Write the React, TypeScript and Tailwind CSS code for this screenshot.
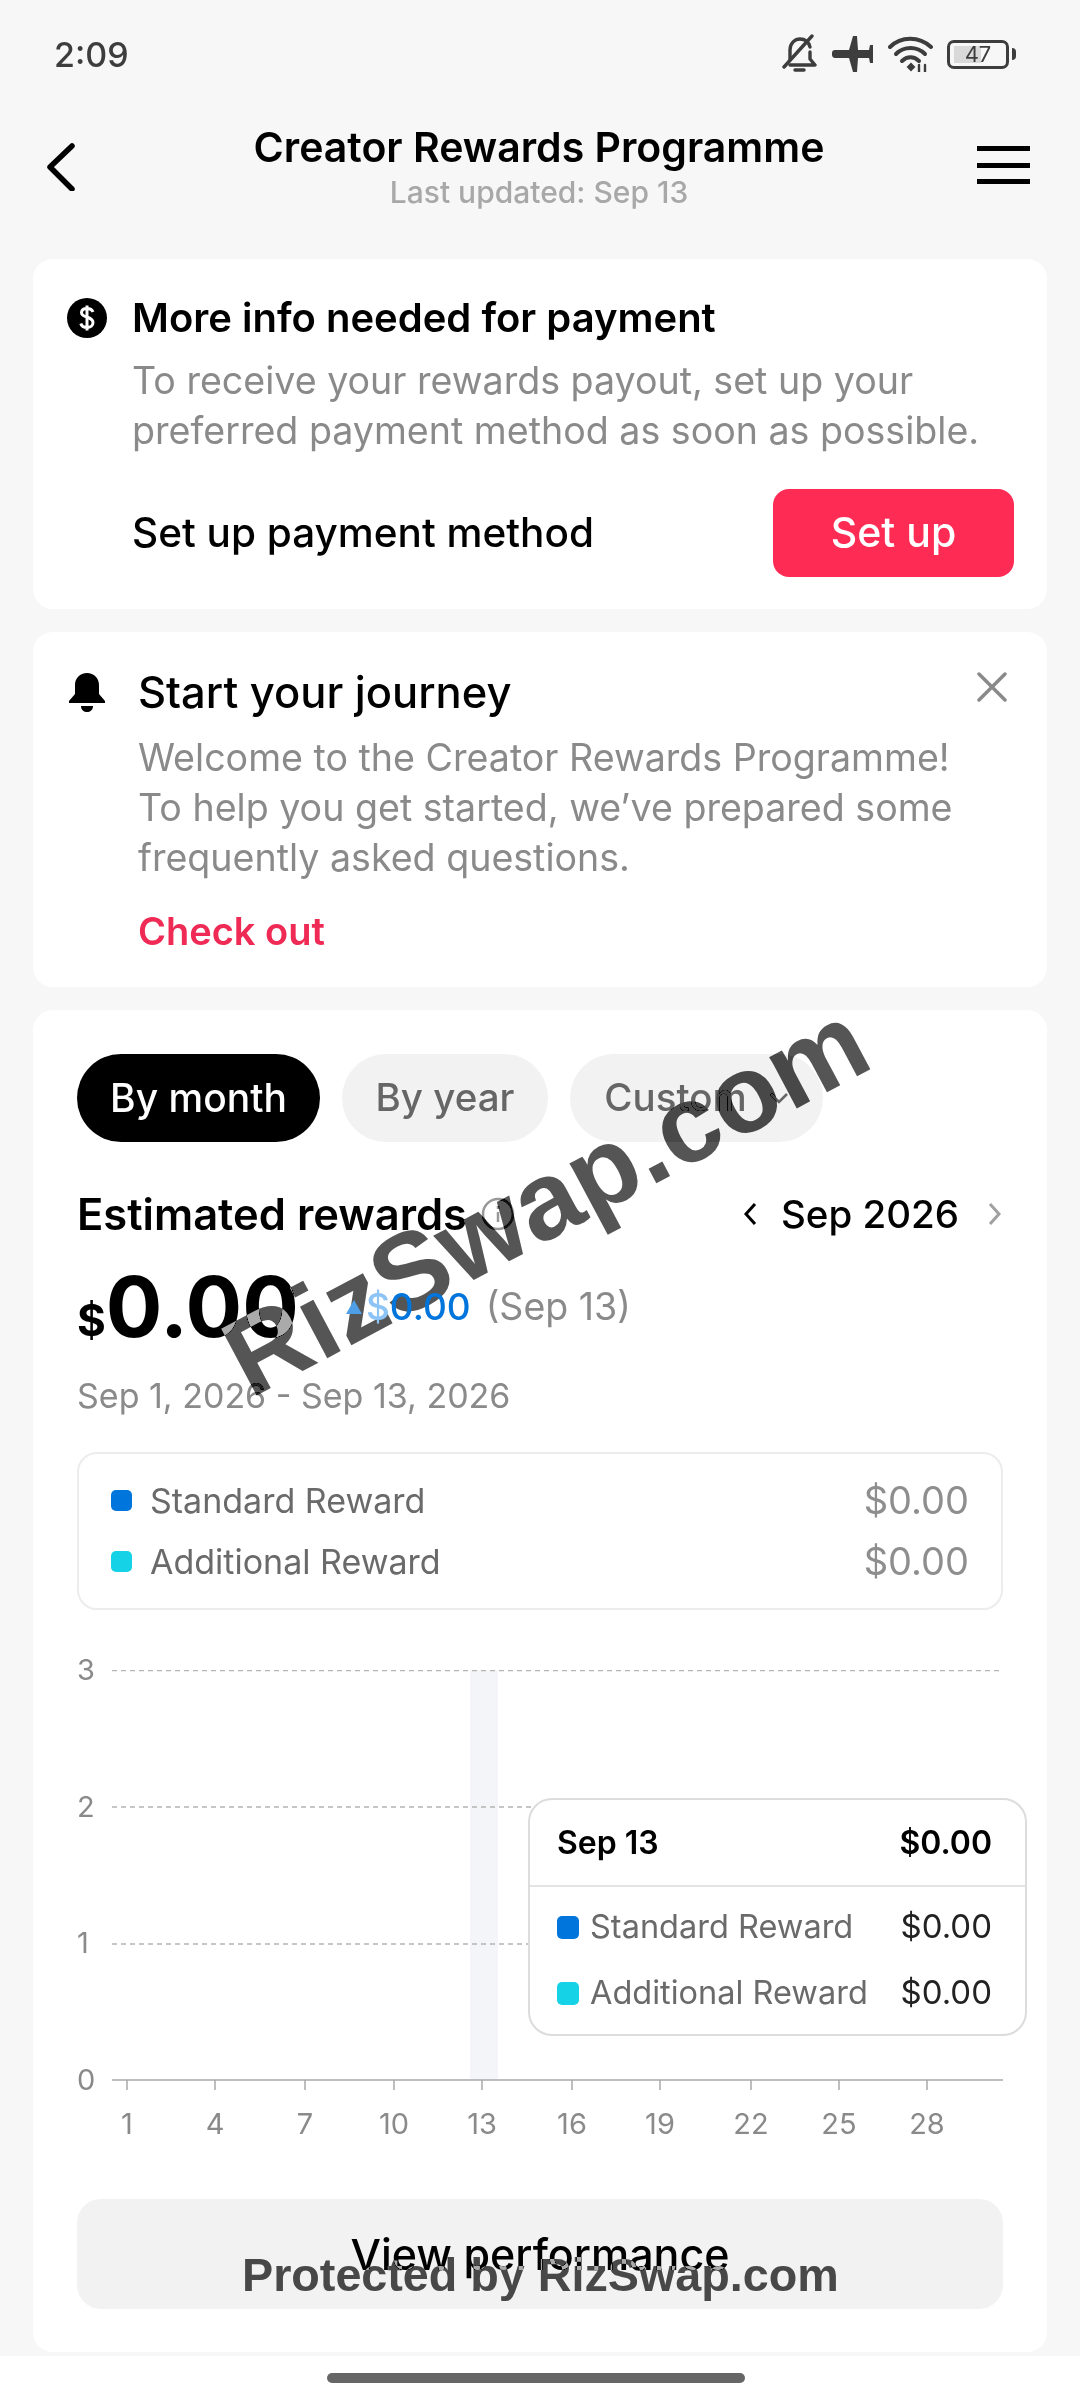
import React from "react";

const ticks = ["1","4","7","10","13","16","19","22","25","28"];
const tickX = [15,103,193,282,370,460,548,639,727,815];

function StatusIcons() {
  return (
    <div className="flex items-center">
      <svg width="36" height="40" viewBox="0 0 36 40" fill="none" stroke="#3d3d3d" strokeWidth="3.4" strokeLinecap="round" strokeLinejoin="round">
        <path d="M9 26 V16 C9 9 14 5 19 5 C24 5 28 8 29 13" />
        <path d="M29 18 V25 L34 31 H9" />
        <path d="M3 33 L31 2" />
        <path d="M14 36 H23" />
      </svg>
      <svg className="ml-[15px]" width="42" height="36" viewBox="0 0 42 36" fill="#3d3d3d">
        <path d="M0 17 C0 15 1 14 3 14 H17 L21 0 H25 L26 14 H37 L38 9 H41 V27 H38 L37 22 H26 L25 36 H21 L17 22 H3 C1 22 0 20 0 19 Z" />
      </svg>
      <svg className="ml-[14px]" width="46" height="36" viewBox="0 0 46 36" fill="none" stroke="#3d3d3d" strokeWidth="4" strokeLinecap="round">
        <path d="M2 11 C13 0 31 0 43 11" />
        <path d="M8 18 C16 10 29 10 37 18" />
        <path d="M14 25 C19 20 26 20 31 25" />
        <path d="M20 31 L23 34 L26 31 L23 28 Z" fill="#3d3d3d" strokeWidth="2" />
        <path d="M31 36 V29 M37 36 V29" strokeWidth="2.4" />
      </svg>
      <div className="ml-[13px] relative flex h-[29px] w-[62px] items-center rounded-[7px] border-[3px] border-[#3d3d3d]">
        <div className="ml-[4px] h-[17px] w-[27px] bg-[#d9d9d9]" />
        <span className="absolute inset-0 flex items-center justify-center text-[22px] leading-none text-[#3d3d3d]">47</span>
      </div>
      <div className="ml-[3px] h-[12px] w-[4px] rounded-r-sm bg-[#3d3d3d]" />
    </div>
  );
}

function Legend({ color, label, value }: { color: string; label: string; value: string }) {
  return (
    <div className="flex h-[61px] items-center">
      <div className={`h-[21px] w-[21px] rounded-[5px] ${color}`} />
      <span className="ml-[18px] text-[34px] text-[#6a6a6a]">{label}</span>
      <span className="ml-auto text-[38px] text-[#8e8e8e]">{value}</span>
    </div>
  );
}

function TipRow({ color, label }: { color: string; label: string }) {
  return (
    <div className="flex h-[66px] items-center">
      <div className={`h-[23px] w-[22px] rounded-[5px] ${color}`} />
      <span className="ml-[11px] text-[32.5px] text-[#6a6a6a]">{label}</span>
      <span className="ml-auto text-[33px] text-[#222]">$0.00</span>
    </div>
  );
}

export default function App() {
  return (
    <div className="relative flex h-[2400px] w-[1080px] flex-col overflow-hidden bg-[#f7f7f7]" style={{ fontFamily: "Inter, Roboto, sans-serif" }}>
      {/* status bar */}
      <div className="flex h-[108px] shrink-0 items-center justify-between pl-[54px] pr-[64px]">
        <span className="text-[34px] font-medium text-[#3d3d3d]">2:09</span>
        <StatusIcons />
      </div>
      {/* header */}
      <div className="flex h-[151px] shrink-0 items-start justify-between pl-[46px] pr-[50px]">
        <div className="w-[53px]">
          <svg className="mt-[35px]" width="30" height="48" viewBox="0 0 30 48" fill="none" stroke="#000" strokeWidth="5.5" strokeLinecap="round" strokeLinejoin="round">
            <path d="M26 3 L4 24 L26 46" />
          </svg>
        </div>
        <div className="ml-[2px] flex flex-col items-center pt-[14px]">
          <span className="text-[41px] font-semibold leading-[50px] text-black">Creator Rewards Programme</span>
          <span className="mt-[2px] text-[30px] font-medium leading-[36px] text-[#a8a8a8]">Last updated: Sep 13</span>
        </div>
        <div className="mt-[38px] flex h-[38px] w-[53px] flex-col justify-between">
          <div className="h-[5px] bg-black" />
          <div className="h-[5px] bg-black" />
          <div className="h-[5px] bg-black" />
        </div>
      </div>

      <div className="flex flex-1 flex-col gap-[23px] px-[33px]">
        {/* payment card */}
        <div className="h-[350px] rounded-[20px] bg-white pl-[34px] pr-[33px] pt-[36px]">
          <div className="flex items-center">
            <svg width="40" height="40" viewBox="0 0 40 40" className="shrink-0">
              <circle cx="20" cy="20" r="20" fill="#000" />
              <path d="M26 14 C25 11.5 23 10.5 20 10.5 C16.5 10.5 14.5 12.3 14.5 14.7 C14.5 20 26 18 26 24.5 C26 27.5 23.5 29.5 20 29.5 C16.5 29.5 14.5 28 13.8 25.5 M20 7.5 V32.5" fill="none" stroke="#fff" strokeWidth="3" />
            </svg>
            <span className="ml-[25px] text-[40px] font-semibold leading-[46px] text-black">More info needed for payment</span>
          </div>
          <div className="ml-[65px] mt-[15px] text-[37.6px] leading-[50px] text-[#8a8a8a]">
            <div>To receive your rewards payout, set up your</div>
            <div>preferred payment method as soon as possible.</div>
          </div>
          <div className="mt-[33px] flex items-center justify-between pl-[65px]">
            <span className="text-[40.5px] font-[550] text-black">Set up payment method</span>
            <div className="flex h-[88px] w-[241px] items-center justify-center rounded-[16px] bg-[#fe2c55] text-[41px] font-[550] text-white">Set up</div>
          </div>
        </div>

        {/* journey card */}
        <div className="relative h-[355px] rounded-[20px] bg-white pl-[34px] pt-[35px]">
          <div className="flex items-center">
            <svg width="40" height="42" viewBox="0 0 40 42" className="shrink-0" fill="#000">
              <path d="M20 2 C13 2 8 7 8 14 V23 L2 30 V32 H38 V30 L32 23 V14 C32 7 27 2 20 2 Z" />
              <path d="M14 35 H26 C26 39 23 41 20 41 C17 41 14 39 14 35 Z" />
            </svg>
            <span className="ml-[31px] text-[43.5px] font-[550] leading-[50px] text-black">Start your journey</span>
          </div>
          <div className="ml-[71px] mt-[16px] text-[37.6px] leading-[50px] text-[#8a8a8a]">
            <div>Welcome to the Creator Rewards Programme!</div>
            <div>To help you get started, we’ve prepared some</div>
            <div>frequently asked questions.</div>
          </div>
          <div className="ml-[71px] mt-[25px] text-[38px] font-semibold leading-[46px] text-[#ee2a55]">Check out</div>
          <svg className="absolute right-[40px] top-[40px]" width="30" height="30" viewBox="0 0 30 30" stroke="#8a8a8a" strokeWidth="3.5" strokeLinecap="round">
            <path d="M2 2 L28 28 M28 2 L2 28" />
          </svg>
        </div>

        {/* rewards card */}
        <div className="h-[1342px] rounded-[20px] bg-white px-[44px] pt-[44px]">
          <div className="flex gap-[22px]">
            <div className="flex h-[88px] w-[243px] items-center justify-center rounded-full bg-black text-[39px] font-[550] text-white">By month</div>
            <div className="flex h-[88px] w-[206px] items-center justify-center rounded-full bg-[#f2f2f2] text-[38.5px] font-[550] text-[#666]">By year</div>
            <div className="flex h-[88px] w-[253px] items-center justify-center gap-[22px] rounded-full bg-[#f2f2f2] text-[38.5px] font-[550] text-[#666]">
              Custom
              <svg width="20" height="13" viewBox="0 0 20 13" fill="none" stroke="#666" strokeWidth="2.5"><path d="M2 2 L10 10 L18 2" /></svg>
            </div>
          </div>

          <div className="mt-[47px] flex items-center">
            <span className="text-[43.5px] font-semibold leading-[50px] text-black">Estimated rewards</span>
            <svg className="ml-[14px]" width="34" height="34" viewBox="0 0 34 34" fill="none" stroke="#999" strokeWidth="2.5">
              <circle cx="17" cy="17" r="15" />
              <path d="M17 15 V25 M17 9 V12" />
            </svg>
            <svg className="ml-auto" width="16" height="26" viewBox="0 0 16 26" fill="none" stroke="#000" strokeWidth="3"><path d="M13 3 L4 13 L13 23" /></svg>
            <span className="ml-[23px] text-[38.5px] font-[550] leading-[50px] text-black">Sep 2026</span>
            <svg className="ml-[28px]" width="16" height="26" viewBox="0 0 16 26" fill="none" stroke="#a0a0a0" strokeWidth="3"><path d="M3 3 L12 13 L3 23" /></svg>
          </div>

          <div className="mt-[22px] flex h-[92px] items-end">
            <span className="mb-[8px] text-[44px] font-bold leading-[50px] text-black">$</span>
            <span className="text-[84px] font-bold leading-[92px] text-black">0.00</span>
            <div className="relative z-10 mb-[21px] ml-[46px] flex items-center self-end">
              <svg width="18" height="16" viewBox="0 0 18 16" fill="#4f9fe8"><path d="M9 1 L17 15 H1 Z" /></svg>
              <span className="ml-[3px] text-[37px] font-medium leading-[50px] text-[#0075db]">
                <span className="text-[#8cc4f5]">$</span>0.00
              </span>
              <span className="ml-[15px] text-[37.5px] leading-[50px] text-[#8a8a8a]">(Sep 13)</span>
            </div>
          </div>
          <div className="mt-[18px] text-[34px] leading-[50px] text-[#8a8a8a]">Sep 1, 2026 - Sep 13, 2026</div>

          <div className="mt-[31px] h-[158px] rounded-[20px] border-2 border-[#ececec] px-[32px] pt-[16px]">
            <Legend color="bg-[#0075db]" label="Standard Reward" value="$0.00" />
            <Legend color="bg-[#16d2e6]" label="Additional Reward" value="$0.00" />
          </div>

          {/* chart */}
          <div className="relative mt-[46px] flex h-[480px]">
            <div className="flex h-[438px] w-[35px] flex-col justify-between text-[29px] leading-[28px] text-[#8a8a8a]">
              <span>3</span><span>2</span><span>1</span><span>0</span>
            </div>
            <div className="relative flex-1 pt-[14px]">
              <svg width="891" height="440" viewBox="0 0 891 440" fill="none">
                <rect x="358" y="0" width="28" height="410" fill="#f4f5f8" />
                <path d="M0 0.5 H891 M0 137 H891 M0 274 H891" stroke="#b4b4b4" strokeWidth="1.5" strokeDasharray="5 4" />
                <path d="M0 410 H891" stroke="#a8a8a8" strokeWidth="1.5" />
                {tickX.map((x) => (
                  <path key={x} d={`M${x} 410 V420`} stroke="#a8a8a8" strokeWidth="1.5" />
                ))}
              </svg>
              <div className="relative h-[40px] text-[29px] leading-[40px] text-[#8a8a8a]">
                {ticks.map((t, i) => (
                  <span key={t} className="absolute top-[-6px] w-[60px] text-center" style={{ left: tickX[i] - 30 }}>{t}</span>
                ))}
              </div>
              {/* tooltip */}
              <div className="absolute left-[416px] top-[142px] h-[238px] w-[499px] rounded-[24px] border-2 border-[#dcdcdc] bg-white">
                <div className="flex h-[87px] items-center justify-between border-b-2 border-[#e4e4e4] pl-[27px] pr-[33px] text-[32px] font-semibold text-black">
                  <span>Sep 13</span><span>$0.00</span>
                </div>
                <div className="pl-[27px] pr-[33px] pt-[7px]">
                  <TipRow color="bg-[#0075db]" label="Standard Reward" />
                  <TipRow color="bg-[#16d2e6]" label="Additional Reward" />
                </div>
              </div>
            </div>
          </div>

          <div className="mt-[63px] flex h-[110px] items-center justify-center rounded-[24px] bg-[#f2f2f2] text-[43px] font-[550] text-black">View performance</div>
        </div>
      </div>

      {/* nav bar */}
      <div className="mt-[4px] flex h-[44px] shrink-0 items-start justify-center bg-white">
        <div className="mt-[17px] h-[10px] w-[418px] -translate-x-[4px] rounded-full bg-[#666]" />
      </div>

      {/* watermarks */}
      <div className="absolute left-[191px] top-[1144px] -rotate-[28deg] whitespace-nowrap text-[110px] font-bold leading-none text-[#aaaaaa] mix-blend-difference" style={{ fontFamily: "'Liberation Sans', sans-serif" }}>RizSwap.com</div>
      <div className="absolute left-[242px] top-[2247px] whitespace-nowrap text-[46.7px] font-bold leading-[56px] text-[#aaaaaa] mix-blend-difference" style={{ fontFamily: "'Liberation Sans', sans-serif" }}>Protected by RizSwap.com</div>
    </div>
  );
}
